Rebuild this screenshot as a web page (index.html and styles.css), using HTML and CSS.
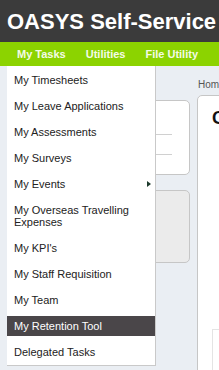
FILE: index.html
```html
<!DOCTYPE html>
<html>
<head>
<meta charset="utf-8">
<link rel="stylesheet" href="styles.css">
</head>
<body>
<header class="top">
  <h1 class="brand">OASYS Self-Service</h1>
</header>
<nav class="nav">
  <ul class="nav-list">
    <li class="nav-item open">My Tasks
      <ul class="dropdown">
        <li class="dd-item">My Timesheets</li>
        <li class="dd-item">My Leave Applications</li>
        <li class="dd-item">My Assessments</li>
        <li class="dd-item">My Surveys</li>
        <li class="dd-item has-sub">My Events<span class="caret"></span></li>
        <li class="dd-item">My Overseas Travelling Expenses</li>
        <li class="dd-item">My KPI's</li>
        <li class="dd-item">My Staff Requisition</li>
        <li class="dd-item">My Team</li>
        <li class="dd-item active">My Retention Tool</li>
        <li class="dd-item">Delegated Tasks</li>
      </ul>
    </li>
    <li class="nav-item">Utilities</li>
    <li class="nav-item">File Utility</li>
  </ul>
</nav>
<div class="content">
  <aside class="side">
    <div class="card">
      <div class="card-line"></div>
      <div class="card-line"></div>
    </div>
    <div class="card card-gray"></div>
  </aside>
  <main class="main">
    <div class="crumb">Home</div>
    <section class="panel">
      <h2 class="panel-title">Calendar</h2>
      <div class="panel-box"></div>
    </section>
  </main>
</div>
</body>
</html>
```

FILE: styles.css
```css
html, body {
  margin: 0;
  padding: 0;
}
body {
  width: 219px;
  height: 370px;
  overflow: hidden;
  background: #eaeef3;
  font-family: "Liberation Sans", Arial, sans-serif;
}
.top {
  background: #3b3b3b;
  height: 42px;
  padding: 0 0 0 7px;
  box-sizing: border-box;
}
.brand {
  margin: 0;
  color: #ffffff;
  font-size: 22px;
  font-weight: bold;
  line-height: 42px;
  white-space: nowrap;
  padding-top: 1px;
}
.nav {
  background: #8cd300;
  height: 24px;
  padding-left: 7px;
  position: relative;
  z-index: 5;
}
.nav-list {
  list-style: none;
  margin: 0;
  padding: 0;
  display: flex;
  height: 24px;
  align-items: center;
}
.nav-item {
  color: #f4fbe6;
  font-size: 11px;
  font-weight: bold;
  padding: 0 10px;
  white-space: nowrap;
  line-height: 24px;
}
.dropdown {
  position: absolute;
  top: 24px;
  left: 7px;
  width: 148px;
  margin: 0;
  padding: 4px 0 3px;
  list-style: none;
  background: #ffffff;
  border-right: 1px solid #c9c9c9;
  border-bottom: 1px solid #c9c9c9;
  display: flex;
  flex-direction: column;
  gap: 6px;
}
.dd-item {
  position: relative;
  padding: 4px 7px;
  font-size: 11px;
  font-weight: normal;
  line-height: 12px;
  color: #222222;
  white-space: normal;
}
.dd-item.active {
  background: #4a4649;
  color: #ffffff;
}
.caret {
  position: absolute;
  right: 4px;
  top: 7px;
  width: 0;
  height: 0;
  border-top: 3px solid transparent;
  border-bottom: 3px solid transparent;
  border-left: 4px solid #1d3a2c;
}
.content {
  display: grid;
  grid-template-columns: 182px 400px;
  column-gap: 7px;
  padding-left: 8px;
}
.side {
  display: flex;
  flex-direction: column;
  gap: 15px;
  padding-top: 34px;
}
.card {
  height: 75px;
  box-sizing: border-box;
  background: #ffffff;
  border: 1px solid #c6c6c6;
  border-radius: 5px;
  padding: 33px 17px 0 0;
  display: flex;
  flex-direction: column;
  gap: 19px;
  align-items: flex-end;
}
.card-line {
  width: 120px;
  height: 1px;
  background: #d0d0d0;
}
.card-gray {
  background: #ebebeb;
  height: 73px;
}
.main {
  padding-top: 13px;
}
.crumb {
  font-size: 10px;
  color: #555555;
  line-height: 12px;
  padding-left: 1px;
}
.panel {
  margin-top: 4px;
  height: 400px;
  background: #ffffff;
  border: 1px solid #c6c6c6;
  border-radius: 5px;
  padding: 11px 14px;
}
.panel-title {
  margin: 0;
  font-size: 18px;
  font-weight: bold;
  color: #111111;
  line-height: 22px;
}
.panel-box {
  margin-top: 200px;
  height: 60px;
  border: 1px solid #e4e4e4;
}
```
